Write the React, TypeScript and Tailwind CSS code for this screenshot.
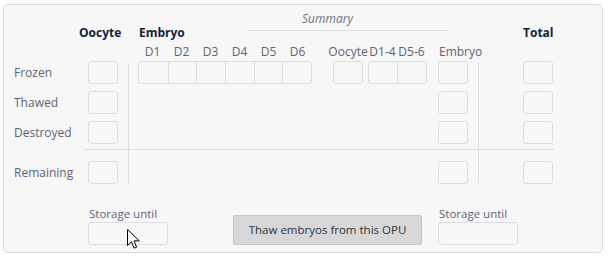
import React from 'react';

const labelCls = "text-[12px] leading-4 text-[#5d6474]";
const box = "h-[23px] w-[30px] rounded-[3px] border border-[#dcdcdc] bg-[#f7f7f7]";

const Box = ({ className = '' }: { className?: string }) => <div className={`${box} ${className}`} />;

const Segmented = ({ count, cell }: { count: number; cell: number }) => (
  <div className="flex h-[23px] rounded-[3px] border border-[#dcdcdc] bg-[#f7f7f7]">
    {Array.from({ length: count }).map((_, i) => (
      <div key={i} style={{ width: cell }} className={i > 0 ? 'border-l border-[#dcdcdc]' : ''} />
    ))}
  </div>
);

const StorageField = () => (
  <div className="flex w-[80px] flex-col">
    <span className="whitespace-nowrap pl-[1px] text-[11.5px] leading-4 text-[#5d6474]">Storage until</span>
    <div className="h-[23px] w-[80px] rounded-[3px] border border-[#dcdcdc] bg-[#f7f7f7]" />
  </div>
);

const Cursor = () => (
  <svg className="absolute left-[127px] top-[229px]" width="14" height="22" viewBox="0 0 14 22">
    <path d="M0.5 0.5 L0.5 16.5 L4.5 12.8 L7.2 19.2 L9.6 18.2 L7 11.9 L12.3 11.9 Z" fill="#fff" stroke="#000" strokeWidth="1" strokeLinejoin="miter" />
  </svg>
);

export default function App() {
  const rows = ['Frozen', 'Thawed', 'Destroyed'];
  return (
    <div className="relative h-[258px] w-[609px] bg-white" style={{ fontFamily: '"Open Sans", "Noto Sans", sans-serif' }}>
      <div className="absolute left-[3px] top-[4px] h-[249px] w-[600px] rounded-[5px] border border-[#dadada] bg-[#f7f7f7]">
        <div className="ml-[10px] mt-[6px] grid grid-cols-[74px_30px_10px_1px_9px_174px_21px_30px_5px_59px_11px_30px_10px_1px_44px_30px] grid-rows-[33px_17px_23px_7px_23px_7px_23px_5px_1px_11px_23px]">
          {/* header row */}
          <div className="col-start-2 row-start-1 self-end mb-[3px] -ml-[9px] whitespace-nowrap text-[12px] font-bold leading-4 text-[#13203f]">Oocyte</div>
          <div className="col-start-6 row-start-1 self-end mb-[3px] ml-[1px] text-[12px] font-bold leading-4 text-[#13203f]">Embryo</div>
          <div className="col-start-6 col-span-7 row-start-1 self-start ml-[110px] h-[20px] w-[201px] border-b border-[#dcdcdc] pl-[54px] text-[12px] italic leading-4 text-[#6d7282]">Summary</div>
          <div className="col-start-16 row-start-1 self-end mb-[3px] text-center text-[12px] font-bold leading-4 text-[#13203f]">Total</div>

          {/* sub headers */}
          <div className="col-start-6 row-start-2 flex">
            {['D1', 'D2', 'D3', 'D4', 'D5', 'D6'].map((d) => (
              <span key={d} className={`${labelCls} w-[29px] text-center`}>{d}</span>
            ))}
          </div>
          <div className="col-start-8 row-start-2 flex justify-center">
            <span className={labelCls}>Oocyte</span>
          </div>
          <div className="col-start-10 row-start-2 flex">
            <span className={`${labelCls} w-[29px] whitespace-nowrap text-center`}>D1-4</span>
            <span className={`${labelCls} w-[29px] whitespace-nowrap text-center`}>D5-6</span>
          </div>
          <div className={`col-start-12 row-start-2 whitespace-nowrap pl-[1px] ${labelCls}`}>Embryo</div>

          {/* data rows */}
          {rows.map((r, i) => {
            const row = ['row-start-3', 'row-start-5', 'row-start-7'][i];
            return (
              <React.Fragment key={r}>
                <div className={`col-start-1 ${row} self-center ${labelCls}`}>{r}</div>
                <Box className={`col-start-2 ${row}`} />
                {i === 0 && (
                  <>
                    <div className={`col-start-6 ${row}`}><Segmented count={6} cell={29} /></div>
                    <Box className={`col-start-8 ${row}`} />
                    <div className={`col-start-10 ${row}`}><Segmented count={2} cell={29} /></div>
                  </>
                )}
                <Box className={`col-start-12 ${row}`} />
                <Box className={`col-start-16 ${row}`} />
              </React.Fragment>
            );
          })}

          {/* separator */}
          <div className="col-start-1 col-span-16 row-start-9 ml-[69px] w-[471px] bg-[#dcdcdc]" />

          <div className={`col-start-1 row-start-11 self-center ${labelCls}`}>Remaining</div>
          <Box className="col-start-2 row-start-11" />
          <Box className="col-start-12 row-start-11" />
          <Box className="col-start-16 row-start-11" />

          {/* vertical lines */}
          <div className="col-start-4 row-start-3 row-span-9 mt-[2px] mb-[1px] bg-[#dcdcdc]" />
          <div className="col-start-14 row-start-3 row-span-9 mt-[2px] mb-[1px] bg-[#dcdcdc]" />
        </div>

        <div className="mt-[22px] flex items-end pl-[84px]">
          <StorageField />
          <button className="ml-[65px] h-[30px] w-[189px] rounded-[2px] border border-[#c6c6c6] bg-[#d7d7d7] text-[11.5px] text-[#2e3340]">
            Thaw embryos from this OPU
          </button>
          <div className="ml-[16px]">
            <StorageField />
          </div>
        </div>
      </div>
      <Cursor />
    </div>
  );
}
